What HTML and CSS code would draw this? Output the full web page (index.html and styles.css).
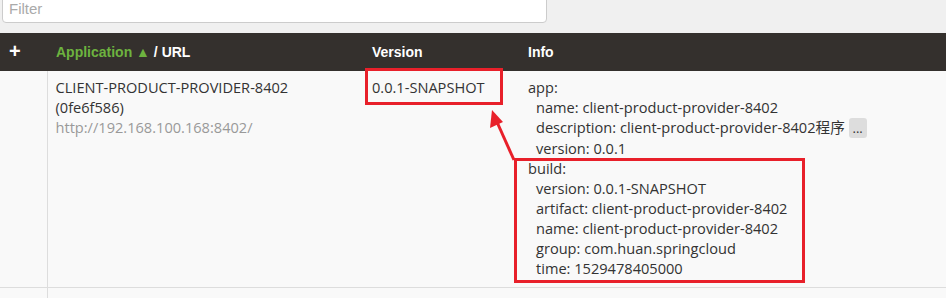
FILE: index.html
```html
<!DOCTYPE html>
<html lang="en">
<head>
  <meta charset="UTF-8" />
  <title>Applications</title>
  <link rel="stylesheet" href="styles.css">
</head>
<body>
  <div class="filter-bar">
    <input class="filter" type="text" placeholder="Filter" />
  </div>

  <table class="apps">
    <thead>
      <tr>
        <th class="col-toggle">+</th>
        <th class="col-app"><span class="sorted">Application ▲</span> / URL</th>
        <th class="col-version">Version</th>
        <th class="col-info">Info</th>
      </tr>
    </thead>
    <tbody>
      <tr>
        <td class="col-toggle"></td>
        <td class="col-app">
          <div>CLIENT-PRODUCT-PROVIDER-8402</div>
          <div>(0fe6f586)</div>
          <div class="url">http://192.168.100.168:8402/</div>
        </td>
        <td class="col-version">
          <div>0.0.1-SNAPSHOT</div>
        </td>
        <td class="col-info">
          <ul class="info">
            <li>app:
              <ul>
                <li>name: client-product-provider-8402</li>
                <li>description: client-product-provider-8402程序 <span class="more">...</span></li>
                <li>version: 0.0.1</li>
              </ul>
            </li>
            <li>build:
              <ul>
                <li>version: 0.0.1-SNAPSHOT</li>
                <li>artifact: client-product-provider-8402</li>
                <li>name: client-product-provider-8402</li>
                <li>group: com.huan.springcloud</li>
                <li>time: 1529478405000</li>
              </ul>
            </li>
          </ul>
        </td>
      </tr>
      <tr class="empty">
        <td class="col-toggle"></td>
        <td></td>
        <td></td>
        <td></td>
      </tr>
    </tbody>
  </table>

  <!-- screenshot annotation -->
  <svg class="marks" width="946" height="298" viewBox="0 0 946 298">
    <rect x="366.5" y="69.5" width="135" height="34" fill="none" stroke="#e8202a" stroke-width="3"/>
    <rect x="515.5" y="159.5" width="288" height="122" fill="none" stroke="#e8202a" stroke-width="3"/>
    <line x1="514" y1="160" x2="497" y2="122" stroke="#e8202a" stroke-width="3"/>
    <polygon points="492,110 490,128 503,122" fill="#e8202a"/>
  </svg>
</body>
</html>
```

FILE: styles.css
```css
body {
  margin: 0;
  background-color: #f0f0f0;
  font-family: "Open Sans", "Noto Sans CJK SC", sans-serif;
  font-size: 14.6px;
  color: #333333;
  position: relative;
  width: 946px;
  height: 298px;
  overflow: hidden;
}

.filter-bar {
  height: 33px;
  padding: 0 400px 0 2px;
  margin-top: -10px;
  margin-bottom: 10px;
}

.filter {
  box-sizing: border-box;
  width: 545px;
  height: 33px;
  margin: 0;
  padding: 4px 6px 0;
  border: 1px solid #cccccc;
  border-radius: 4px;
  background-color: #ffffff;
  font-family: "Liberation Sans", Arial, sans-serif;
  font-size: 15px;
  color: #555555;
}

.filter::placeholder {
  color: #aaaaaa;
}

.apps {
  width: 946px;
  margin-top: 0;
  border-collapse: collapse;
  table-layout: fixed;
}

.apps th {
  height: 36px;
  padding: 0 9px 0 10px;
  background-color: #34302d;
  color: #ffffff;
  font-family: "Liberation Sans", Arial, sans-serif;
  font-size: 14px;
  font-weight: bold;
  text-align: left;
}

.apps th.col-toggle {
  width: 29px;
  font-size: 20px;
  padding-left: 9px;
  padding-bottom: 2px;
}

.apps th.col-app {
  width: 297px;
  padding-left: 9px;
}

.apps th.col-version {
  width: 137px;
}

.sorted {
  color: #6db33f;
}

.apps td {
  background-color: #f9f9f9;
  vertical-align: top;
  padding: 6px 9px 0 10px;
  line-height: 20px;
  border-bottom: 1px solid #dddddd;
}

.apps td.col-toggle {
  border-right: 1px solid #dddddd;
}

.apps td.col-app {
  padding-left: 8px;
}

.url {
  color: #999999;
}

.info,
.info ul {
  list-style: none;
  margin: 0;
  padding: 0;
}

.info ul {
  padding-left: 8px;
}

.apps tbody tr:first-child td {
  height: 210px;
}

.apps tr.empty td {
  height: 10px;
  border-bottom: none;
}

.more {
  display: inline-block;
  background-color: #dddddd;
  border-radius: 3px;
  padding: 0 4px;
  line-height: 20px;
  font-size: 13px;
}

.marks {
  position: absolute;
  left: 0;
  top: 0;
  pointer-events: none;
}
```
